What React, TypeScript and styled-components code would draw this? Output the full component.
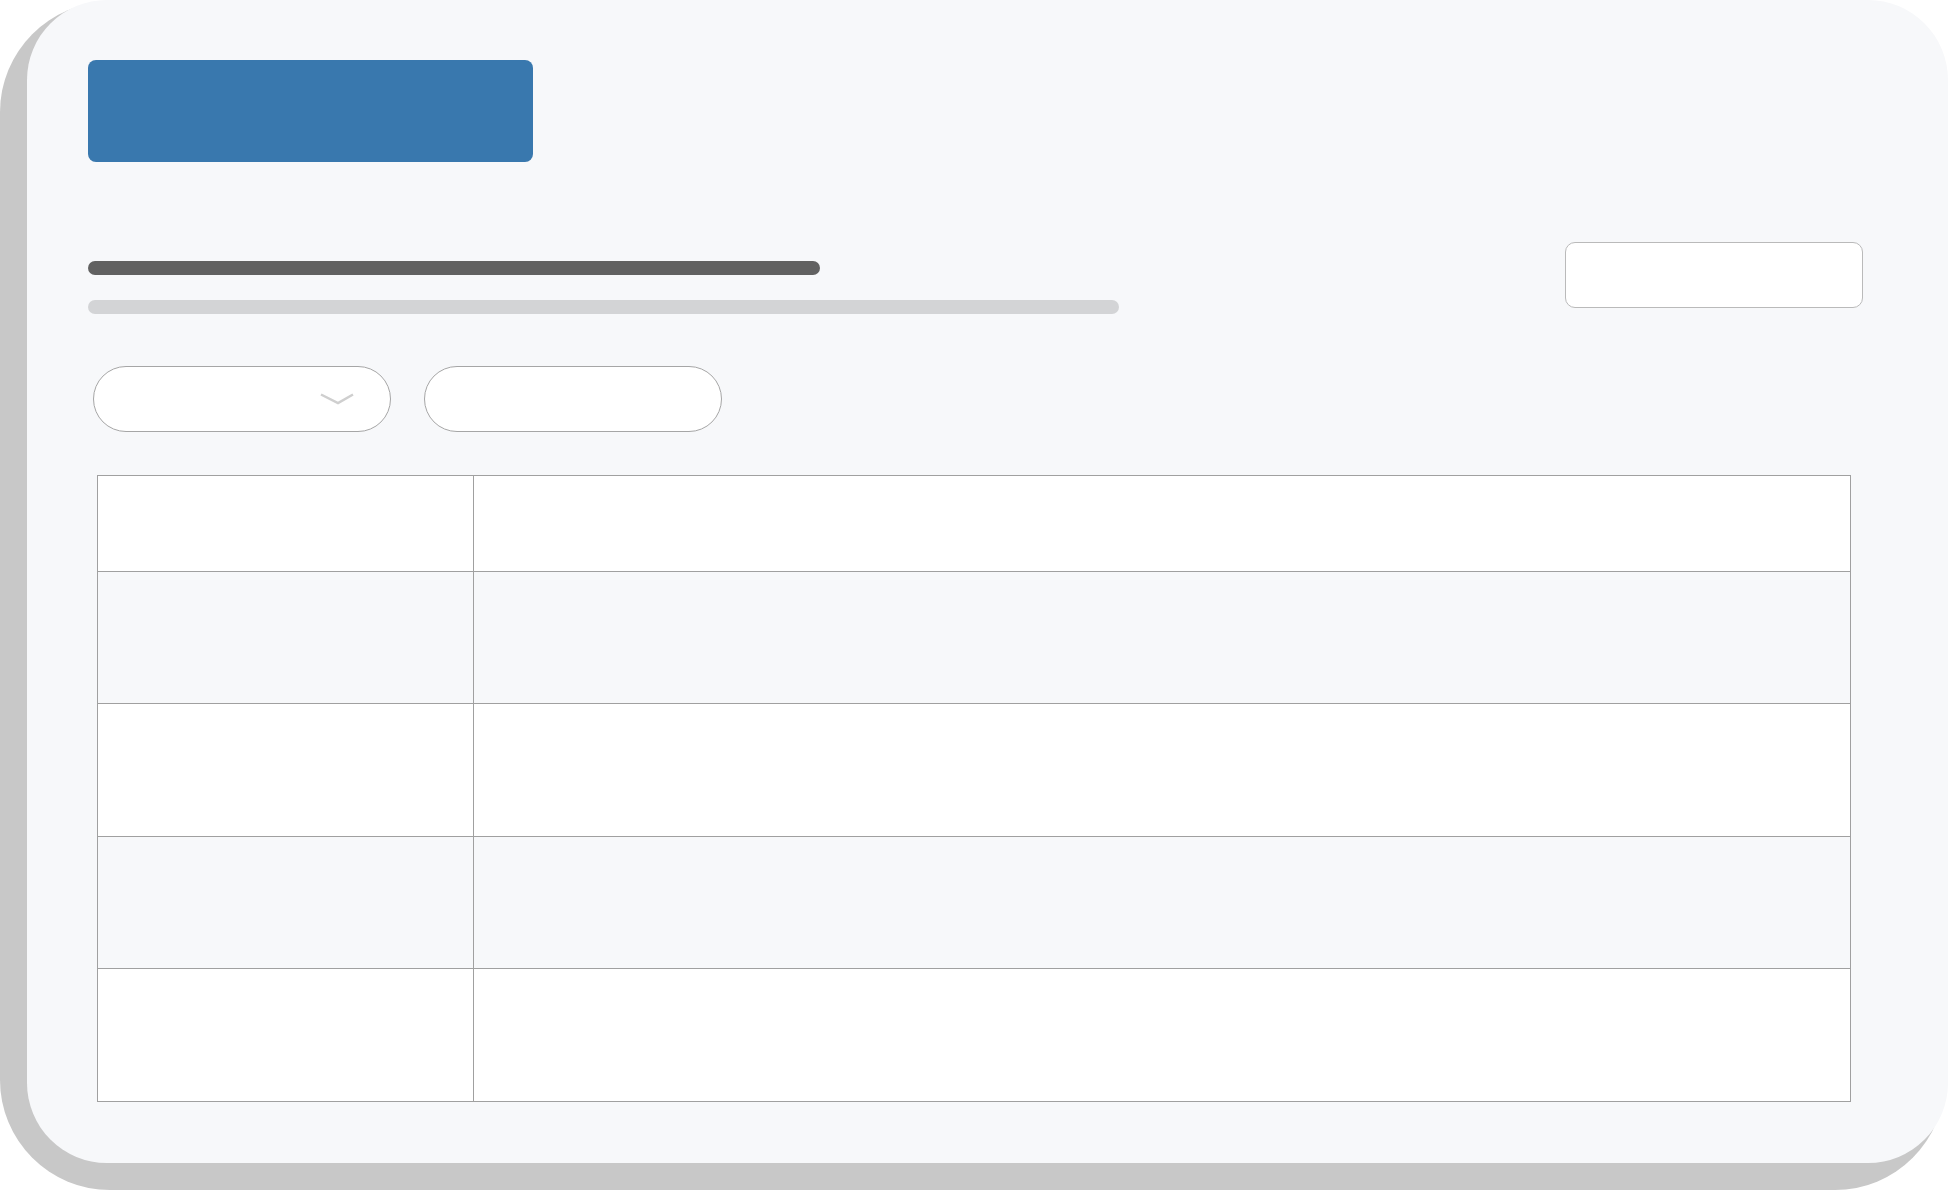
import React from "react";
import styled, { createGlobalStyle } from "styled-components";

const Global = createGlobalStyle`
  html, body {
    margin: 0;
    padding: 0;
    overflow: hidden;
    font-family: "Liberation Sans", Arial, sans-serif;
  }
  html { background: #ffffff; }
  * { box-sizing: border-box; }
`;

const Page = styled.div`
  position: relative;
  isolation: isolate;
  width: 1948px;
  height: 1190px;
  padding-left: 27px;
  background: #ffffff;
`;

const Card = styled.div`
  position: relative;
  width: 1921px;
  height: 1163px;
  border-radius: 80px;
  background: #f7f8fa;
  padding: 60px 85px 0 61px;
  display: flex;
  flex-direction: column;

  &::before {
    content: "";
    position: absolute;
    left: -27px;
    top: 2px;
    right: 3px;
    bottom: -27px;
    border-radius: 110px;
    background: #c8c8c8;
    z-index: -1;
  }
`;

const Banner = styled.div`
  width: 445px;
  height: 102px;
  border-radius: 8px;
  background: #3978ae;
`;

const Header = styled.div`
  margin-top: 80px;
  display: flex;
  justify-content: space-between;
  align-items: flex-start;
`;

const TitleGroup = styled.div`
  padding-top: 19px;
  display: flex;
  flex-direction: column;
  gap: 25px;
`;

const Bar = styled.div<{ $w: number; $tone: "dark" | "light" }>`
  width: ${(p) => p.$w}px;
  height: 14px;
  border-radius: 7px;
  background: ${(p) => (p.$tone === "dark" ? "#616161" : "#d3d4d6")};
`;

const ActionBox = styled.div`
  width: 298px;
  height: 66px;
  border: 1px solid #bababa;
  border-radius: 10px;
  background: #ffffff;
`;

const Filters = styled.div`
  margin-top: 52px;
  padding-left: 5px;
  display: flex;
  gap: 33px;
`;

const Pill = styled.div`
  width: 298px;
  height: 66px;
  border: 1px solid #a6a6a6;
  border-radius: 33px;
  background: #ffffff;
  display: flex;
  align-items: center;
  justify-content: flex-end;
  padding-right: 36px;
`;

const Table = styled.div`
  margin-top: 43px;
  margin-left: 9px;
  width: 1754px;
  border: 1px solid #a0a0a0;
  display: flex;
  flex-direction: column;
`;

const Row = styled.div<{ $h: number; $shade: boolean; $last: boolean }>`
  height: ${(p) => p.$h}px;
  display: grid;
  grid-template-columns: 376px 1fr;
  background: ${(p) => (p.$shade ? "#f7f8fa" : "#ffffff")};
  border-bottom: ${(p) => (p.$last ? "none" : "1px solid #a0a0a0")};
`;

const LabelCell = styled.div`
  border-right: 1px solid #a0a0a0;
`;

const ValueCell = styled.div``;

const Chevron = () => (
  <svg width="34" height="12" viewBox="0 0 34 12" fill="none">
    <polyline
      points="1,1.5 18,10 33,1.5"
      stroke="#cfcfcf"
      strokeWidth="2.5"
      strokeLinejoin="miter"
      fill="none"
    />
  </svg>
);

const rows = [96, 132, 133, 132, 132];

export default function App() {
  return (
    <>
      <Global />
      <Page>
        <Card>
          <Banner />
          <Header>
            <TitleGroup>
              <Bar $w={732} $tone="dark" />
              <Bar $w={1031} $tone="light" />
            </TitleGroup>
            <ActionBox />
          </Header>
          <Filters>
            <Pill>
              <Chevron />
            </Pill>
            <Pill />
          </Filters>
          <Table>
            {rows.map((h, i) => (
              <Row key={i} $h={h} $shade={i % 2 === 1} $last={i === rows.length - 1}>
                <LabelCell />
                <ValueCell />
              </Row>
            ))}
          </Table>
        </Card>
      </Page>
    </>
  );
}
